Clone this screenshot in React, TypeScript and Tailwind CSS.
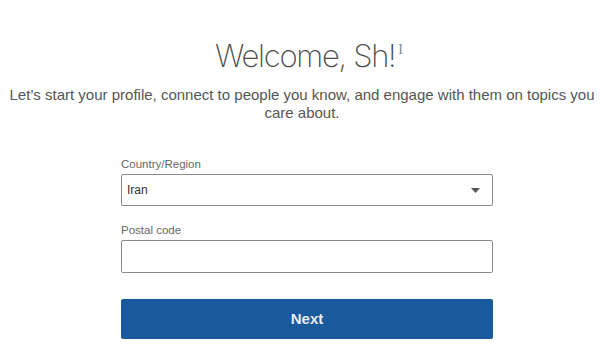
import React from "react";

export default function App() {
  return (
    <div className="w-[604px] h-[350px] bg-white overflow-hidden flex flex-col items-center" style={{ fontFamily: '"Liberation Sans", Arial, sans-serif' }}>
      <div className="mt-[36px] flex items-start pl-[14px]">
        <h1 className="text-[31px] leading-[40px] text-[#4d4d4d] font-extralight tracking-[-1.3px]" style={{ fontFamily: 'Inter, "Liberation Sans", sans-serif' }}>
          Welcome, Sh!
        </h1>
        <span className="ml-[3px] mt-[7px] text-[14px] leading-[14px] text-[#888]" style={{ fontFamily: '"Liberation Serif", serif' }}>I</span>
      </div>
      <p className="mt-[10px] w-[596px] text-center text-[15px] leading-[18px] text-[#555]">
        Let’s start your profile, connect to people you know, and engage with them on topics you care about.
      </p>
      <div className="mt-[35px] w-[372px] ml-[10px] flex flex-col">
        <label className="text-[11.5px] leading-[14px] text-[#666]">Country/Region</label>
        <div className="mt-[3px] h-[32px] border border-[#8a8a8a] rounded-[2px] flex items-center justify-between pl-[5px] pr-[12px]">
          <span className="text-[12px] text-[#333]">Iran</span>
          <svg width="9" height="5" viewBox="0 0 9 5"><path d="M0 0 L9 0 L4.5 5 Z" fill="#555" /></svg>
        </div>
        <label className="mt-[17px] text-[11.5px] leading-[14px] text-[#666]">Postal code</label>
        <div className="mt-[3px] h-[33px] border border-[#8a8a8a] rounded-[2px]" />
        <button className="mt-[26px] h-[40px] bg-[#195a9c] rounded-[2px] text-[#e6edf5] text-[15px] font-bold">
          Next
        </button>
      </div>
    </div>
  );
}
